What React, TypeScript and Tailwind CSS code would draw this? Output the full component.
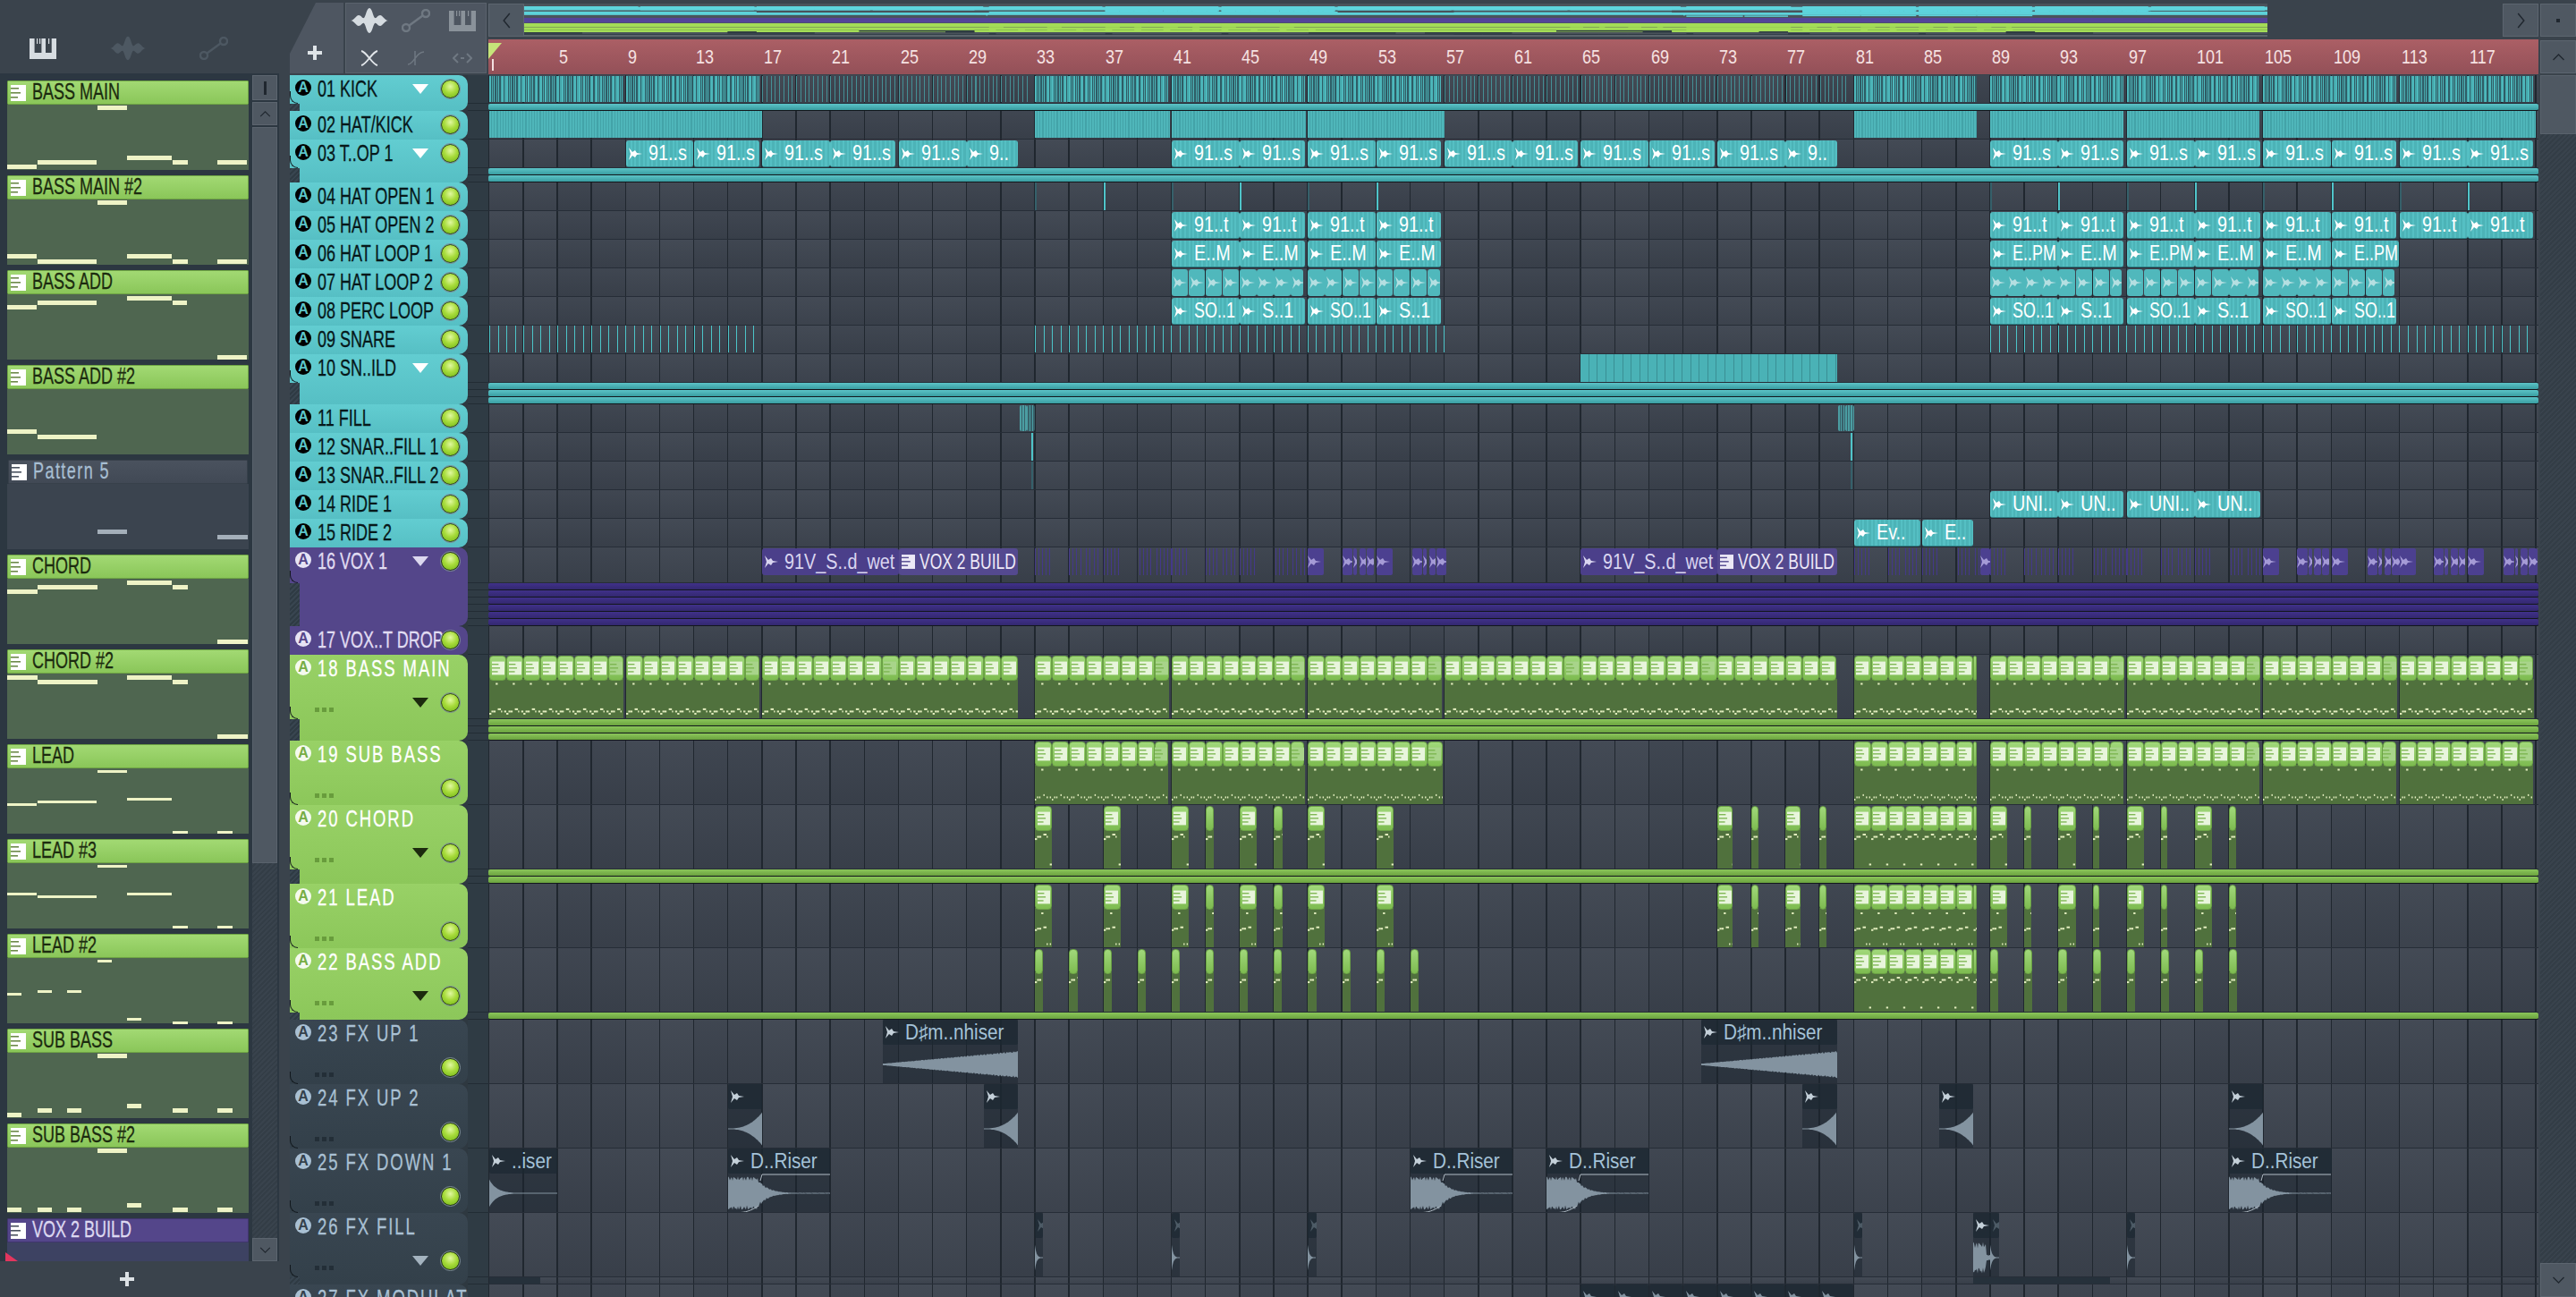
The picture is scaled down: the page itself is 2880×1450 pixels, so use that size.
import React from "react";

const BAR = 19.07;
const FONT = "[font-family:'Liberation_Sans',sans-serif]";

type Note = [number, number, number, number?];
type Pattern = { name: string; kind: "green" | "dim" | "purple"; notes: Note[] };

const BASS_MAIN: Note[] = [[0, 33, 67], [34, 33, 62], [67, 33, 62], [101, 33, 1], [134, 50, 57], [185, 17, 62], [235, 33, 62]];
const BASS_ADD: Note[] = [[0, 33, 12], [34, 33, 7], [67, 33, 7], [134, 50, 2], [185, 16, 7], [235, 33, 68]];
const CHORD: Note[] = [[0, 34, 12], [34, 34, 7], [67, 34, 7], [134, 50, 2], [185, 17, 7], [235, 34, 68]];
const SUB_BASS: Note[] = [[0, 16, 67], [34, 16, 62], [67, 16, 62], [101, 33, 1], [134, 16, 57], [185, 17, 62], [235, 17, 62]];
const LEAD: Note[] = [[0, 33, 39, 3], [34, 33, 36, 3], [67, 33, 36, 3], [101, 33, 2, 3], [134, 50, 33, 3], [185, 17, 70, 3], [235, 17, 70, 3]];

const patterns: Pattern[] = [
  { name: "BASS MAIN", kind: "green", notes: BASS_MAIN },
  { name: "BASS MAIN #2", kind: "green", notes: [[0, 33, 61], [34, 33, 67], [67, 33, 67], [101, 33, 1], [134, 50, 61], [185, 17, 67], [235, 33, 67]] },
  { name: "BASS ADD", kind: "green", notes: BASS_ADD },
  { name: "BASS ADD #2", kind: "green", notes: [[0, 33, 45], [34, 33, 51], [67, 33, 51]] },
  { name: "Pattern 5", kind: "dim", notes: [[101, 33, 51], [235, 34, 57]] },
  { name: "CHORD", kind: "green", notes: CHORD },
  { name: "CHORD #2", kind: "green", notes: [[0, 34, 2], [34, 34, 7], [67, 34, 7], [134, 50, 2], [185, 17, 7], [235, 34, 68]] },
  { name: "LEAD", kind: "green", notes: LEAD },
  { name: "LEAD #3", kind: "green", notes: [[0, 33, 33, 3], [34, 33, 36, 3], [67, 33, 36, 3], [101, 33, 2, 3], [134, 50, 33, 3], [185, 17, 70, 3], [235, 17, 70, 3]] },
  { name: "LEAD #2", kind: "green", notes: [[0, 16, 39, 3], [34, 16, 36, 3], [67, 16, 36, 3], [101, 16, 2, 3], [134, 16, 67, 3], [185, 17, 71, 3], [235, 17, 71, 3]] },
  { name: "SUB BASS", kind: "green", notes: SUB_BASS },
  { name: "SUB BASS #2", kind: "green", notes: [[0, 16, 67], [34, 16, 67], [67, 16, 67], [101, 33, 1], [134, 16, 62], [185, 17, 67], [235, 17, 67]] },
  { name: "VOX 2 BUILD", kind: "purple", notes: [] },
];

type ClipType = "audio" | "mini" | "kick" | "kickDim" | "solid" | "line" | "lineDim" | "snare" | "stripe" | "fill" | "fx" | "pat" | "sliver" | "sliverDim" | "patAudio" | "laneDark";
type WaveKind = "rise" | "up" | "fall" | "tail" | "blip" | "noise";
type Clip = { s: number; e: number; type: ClipType; label?: string; wave?: WaveKind; notes?: Note[] };
type Group = "teal" | "purple" | "green" | "dark";
type Track = { name: string; group: Group; main: number; lanes: number; laneClips?: Clip[]; clips: Clip[] };

const audio = (bars: number[], label: string): Clip[] =>
  bars.map((s) => ({ s, e: s + ((s - 1) % 8 === 4 && label !== "E..PM" ? 3.82 : 3.98), type: "audio", label }));

const seg = (pairs: number[][], type: ClipType, notes?: Note[]): Clip[] =>
  pairs.map(([s, e]) => ({ s, e, type, notes }));

const every = (from: number, to: number, step: number) => {
  const out: number[] = [];
  for (let b = from; b < to; b += step) out.push(b);
  return out;
};

const slivers = (start: number, type: ClipType): Clip[] =>
  [[0, 0.95], [2, 0.6], [2.65, 0.2], [3, 0.4], [3.45, 0.4], [4, 0.95], [6.1, 0.6], [6.75, 0.2], [7.1, 0.4], [7.55, 0.55]].map(([o, w]) => ({
    s: start + o,
    e: start + o + w,
    type,
  }));

const BLOCKS = [[1, 8.85], [9, 16.85], [33, 40.8], [41, 48.8], [49, 56.8], [81, 88.2], [89, 96.8], [97, 104.8], [105, 112.8], [113, 120.8]];
const LATE = [[33, 40.8], [41, 48.8], [49, 56.9], [81, 88.2], [89, 96.8], [97, 104.8], [105, 112.8], [113, 120.8]];
const chordShort = [[33, 34], [37, 38], [41, 42], [43, 43.5], [45, 46], [47, 47.5], [49, 50], [53, 54]];
const chordLate = [[73, 73.9], [75, 75.4], [77, 77.9], [79, 79.4], [81, 88.2], [89, 90], [91, 91.4], [93, 94], [95, 95.4], [97, 98], [99, 99.4], [101, 102], [103, 103.4]];

const tracks: Track[] = [
  { name: "01 KICK", group: "teal", main: 32, lanes: 1, clips: [...seg(BLOCKS, "kick"), ...seg([[17, 32.6], [57, 80.6]], "kickDim")] },
  { name: "02 HAT/KICK", group: "teal", main: 32, lanes: 0, clips: seg([[1, 9], [9, 17], [33, 40.9], [41, 48.9], [49, 57], [81, 88.2], [89, 96.8], [97, 104.8], [105, 121]], "solid") },
  {
    name: "03 T..OP 1",
    group: "teal",
    main: 32,
    lanes: 2,
    clips: [
      ...audio([9, 13, 17, 21, 25], "91..s"),
      { s: 29, e: 32, type: "audio", label: "9.." },
      ...audio([41, 45, 49, 53, 57, 61, 65, 69, 73], "91..s"),
      { s: 77, e: 80, type: "audio", label: "9.." },
      ...audio(every(89, 121, 4), "91..s"),
    ],
  },
  {
    name: "04 HAT OPEN 1",
    group: "teal",
    main: 32,
    lanes: 0,
    clips: [
      ...[37, 45, 53, 93, 101, 109, 117].map((s): Clip => ({ s, e: s + 0.1, type: "line" })),
      ...[33, 41, 49, 89, 97, 105, 113].map((s): Clip => ({ s, e: s + 0.1, type: "lineDim" })),
    ],
  },
  { name: "05 HAT OPEN 2", group: "teal", main: 32, lanes: 0, clips: audio([41, 45, 49, 53, ...every(89, 121, 4)], "91..t") },
  {
    name: "06 HAT LOOP 1",
    group: "teal",
    main: 32,
    lanes: 0,
    clips: [...audio([41, 45, 49, 53, 93, 101, 105], "E..M"), ...audio([89, 97, 109], "E..PM")],
  },
  {
    name: "07 HAT LOOP 2",
    group: "teal",
    main: 32,
    lanes: 0,
    clips: [...every(41, 57, 1), ...every(89, 113, 1)].map((s): Clip => ({ s, e: s + ((s - 1) % 8 === 7 ? 0.72 : 0.97), type: "mini" })),
  },
  {
    name: "08 PERC LOOP",
    group: "teal",
    main: 32,
    lanes: 0,
    clips: [...audio([41, 49, 89, 97, 105, 109], "SO..1"), ...audio([45, 53, 93, 101], "S..1")],
  },
  { name: "09 SNARE", group: "teal", main: 32, lanes: 0, clips: seg([[1, 17], [33, 57], [89, 121]], "snare") },
  { name: "10 SN..ILD", group: "teal", main: 32, lanes: 3, clips: seg([[65, 80]], "stripe") },
  { name: "11 FILL", group: "teal", main: 32, lanes: 0, clips: seg([[32.1, 32.5], [32.5, 33], [80.1, 80.5], [80.5, 81]], "fill") },
  { name: "12 SNAR..FILL 1", group: "teal", main: 32, lanes: 0, clips: seg([[32.8, 32.9], [80.8, 80.9]], "line") },
  { name: "13 SNAR..FILL 2", group: "teal", main: 32, lanes: 0, clips: seg([[32.8, 32.9], [80.8, 80.9]], "lineDim") },
  {
    name: "14 RIDE 1",
    group: "teal",
    main: 32,
    lanes: 0,
    clips: [...audio([89, 97], "UNI.."), ...audio([93, 101], "UN..")],
  },
  {
    name: "15 RIDE 2",
    group: "teal",
    main: 32,
    lanes: 0,
    clips: [
      { s: 81, e: 84.9, type: "audio", label: "Ev.." },
      { s: 85, e: 88, type: "audio", label: "E.." },
    ],
  },
  {
    name: "16 VOX 1",
    group: "purple",
    main: 40,
    lanes: 6,
    clips: [
      { s: 17, e: 25, type: "audio", label: "91V_S..d_wet" },
      { s: 25, e: 32, type: "patAudio", label: "VOX 2 BUILD" },
      { s: 65, e: 73, type: "audio", label: "91V_S..d_wet" },
      { s: 73, e: 80, type: "patAudio", label: "VOX 2 BUILD" },
      ...slivers(33, "sliverDim"),
      ...slivers(41, "sliverDim"),
      ...slivers(49, "sliver"),
      ...slivers(81, "sliverDim"),
      { s: 88.4, e: 89, type: "sliver" },
      ...slivers(89, "sliverDim"),
      ...slivers(97, "sliverDim"),
      ...slivers(105, "sliver"),
      ...slivers(113, "sliver"),
    ],
  },
  { name: "17 VOX..T DROP", group: "purple", main: 32, lanes: 0, clips: [] },
  {
    name: "18 BASS MAIN",
    group: "green",
    main: 72,
    lanes: 3,
    clips: seg([[1, 8.85], [9, 16.85], [17, 32], [33, 40.85], [41, 48.85], [49, 56.85], [57, 80], [81, 88.2], [89, 96.85], [97, 104.85], [105, 112.85], [113, 120.85]], "pat", BASS_MAIN),
  },
  { name: "19 SUB BASS", group: "green", main: 72, lanes: 0, clips: seg(LATE, "pat", SUB_BASS) },
  { name: "20 CHORD", group: "green", main: 72, lanes: 2, clips: seg([...chordShort, ...chordLate], "pat", CHORD) },
  { name: "21 LEAD", group: "green", main: 72, lanes: 0, clips: seg([...chordShort, ...chordLate], "pat", LEAD) },
  {
    name: "22 BASS ADD",
    group: "green",
    main: 72,
    lanes: 1,
    clips: seg(
      [...every(33, 57, 2).map((s) => [s, s + 0.48]), [81, 88.2], ...every(89, 105, 2).map((s) => [s, s + 0.48])],
      "pat",
      BASS_ADD
    ),
  },
  {
    name: "23 FX UP 1",
    group: "dark",
    main: 72,
    lanes: 0,
    clips: [
      { s: 24.05, e: 32, type: "fx", label: "D♯m..nhiser", wave: "rise" },
      { s: 72.05, e: 80, type: "fx", label: "D♯m..nhiser", wave: "rise" },
    ],
  },
  {
    name: "24 FX UP 2",
    group: "dark",
    main: 72,
    lanes: 0,
    clips: [15, 30, 78, 86, 103].map((s): Clip => ({ s, e: s + 2, type: "fx", wave: "up" })),
  },
  {
    name: "25 FX DOWN 1",
    group: "dark",
    main: 72,
    lanes: 0,
    clips: [
      { s: 1, e: 5, type: "fx", label: "..iser", wave: "tail" },
      ...[15, 55, 63, 103].map((s): Clip => ({ s, e: s + 6, type: "fx", label: "D..Riser", wave: "fall" })),
    ],
  },
  {
    name: "26 FX FILL",
    group: "dark",
    main: 72,
    lanes: 1,
    laneClips: seg([[1, 4], [88, 96]], "laneDark"),
    clips: [
      ...[33, 41, 49, 81, 97].map((s): Clip => ({ s, e: s + 0.48, type: "fx", wave: "blip" })),
      { s: 88, e: 89, type: "fx", wave: "noise" },
      { s: 89, e: 89.5, type: "fx", wave: "blip" },
    ],
  },
  {
    name: "27 FX MODULAT",
    group: "dark",
    main: 72,
    lanes: 0,
    clips: every(65, 81, 2).map((s): Clip => ({ s, e: s + 1.95, type: "fx" })),
  },
];

const HEADER: Record<Group, { bg: string; text: string; tri: string; badge: string; badgeText: string; dots: string }> = {
  teal: { bg: "bg-[linear-gradient(#62cdd1,#56bfc4)]", text: "text-[#07181a]", tri: "border-t-white", badge: "bg-black", badgeText: "text-[#5cc5c9]", dots: "bg-[#3a9094]" },
  purple: { bg: "bg-[#54468a]", text: "text-[#e0dcf2]", tri: "border-t-[#dcd8ef]", badge: "bg-[#e6e3f4]", badgeText: "text-[#54468a]", dots: "bg-[#3a2f66]" },
  green: { bg: "bg-[linear-gradient(#98d166,#8cc75a)]", text: "text-white", tri: "border-t-[#1c2a0e]", badge: "bg-[#f4faee]", badgeText: "text-[#76ad45]", dots: "bg-[#689c3c]" },
  dark: { bg: "bg-[linear-gradient(#394651,#33404a)]", text: "text-[#a9c0d3]", tri: "border-t-[#a4b3bf]", badge: "bg-[#a9c0d3]", badgeText: "text-[#34414c]", dots: "bg-[#232e37]" },
};

const LANE: Record<Group, string> = {
  teal: "bg-[linear-gradient(#5cc3c7,#399da1)]",
  purple: "bg-[linear-gradient(#40318a,#33286f)]",
  green: "bg-[linear-gradient(#8bc65a,#6ba33f)]",
  dark: "bg-[linear-gradient(#8bc65a,#6ba33f)]",
};

const GRID =
  "bg-[repeating-linear-gradient(90deg,#20272f_0,#20272f_1.5px,transparent_1.5px,transparent_38.14px),linear-gradient(rgba(255,255,255,0.025),rgba(0,0,0,0.05)),repeating-linear-gradient(90deg,#3f4651_0,#3f4651_76.28px,#3b424d_76.28px,#3b424d_152.56px)]";

const Arrow = ({ className = "text-white" }: { className?: string }) => (
  <svg viewBox="0 0 15 14" className={`w-[15px] h-[14px] shrink-0 ${className}`} fill="currentColor">
    <path d="M0 0 L4 5 L7 3 L9 6 L15 7 L9 8 L7 11 L4 9 L0 14 L2 7 Z" />
  </svg>
);

const PatIcon = ({ fg = "#fff", bg = "#4f6650", className = "w-[17px] h-[18px]" }: { fg?: string; bg?: string; className?: string }) => (
  <svg viewBox="0 0 17 18" className={`shrink-0 ${className}`}>
    <rect width="17" height="18" fill={fg} />
    <rect x="0" y="3" width="9" height="1.6" fill={bg} />
    <rect x="0" y="8" width="11" height="1.6" fill={bg} />
    <rect x="0" y="13" width="8" height="1.6" fill={bg} />
  </svg>
);

const PianoIcon = ({ color, bg, className }: { color: string; bg: string; className: string }) => (
  <svg viewBox="0 0 30 23" className={className}>
    <rect width="30" height="23" fill={color} />
    <rect x="5.6" y="0" width="7.8" height="16" fill={bg} />
    <rect x="18" y="0" width="6.7" height="16" fill={bg} />
    <rect x="8" y="0" width="1.2" height="6" fill={color} />
    <rect x="11" y="0" width="1.2" height="6" fill={color} />
    <rect x="21" y="0" width="1.2" height="6" fill={color} />
  </svg>
);

const WaveIcon = ({ color, className }: { color: string; className: string }) => (
  <svg viewBox="0 0 42 28" className={className} fill={color}>
    <path d="M0 14 C4 14 6 8 9 8 C12 8 13 12 15 11 C17 9 18 0 21 0 C24 0 25 9 27 11 C29 12 30 8 33 8 C36 8 38 14 42 14 C38 14 36 20 33 20 C30 20 29 16 27 17 C25 19 24 28 21 28 C18 28 17 19 15 17 C13 16 12 20 9 20 C6 20 4 14 0 14 Z" />
  </svg>
);

const CurveIcon = ({ color, className }: { color: string; className: string }) => (
  <svg viewBox="0 0 32 26" className={className} fill="none" stroke={color} strokeWidth="2.4">
    <circle cx="5" cy="21" r="4" />
    <circle cx="27" cy="5" r="4" />
    <line x1="8.5" y1="18.5" x2="23.5" y2="7.5" />
  </svg>
);

const PlusIcon = ({ className }: { className: string }) => (
  <svg viewBox="0 0 16 16" className={className} fill="currentColor">
    <rect x="6" y="0" width="4" height="16" />
    <rect x="0" y="6" width="16" height="4" />
  </svg>
);

const Chevron = ({ dir, className = "" }: { dir: "up" | "down" | "left" | "right"; className?: string }) => {
  const d = { up: "M2 12 L11 3 L20 12", down: "M2 3 L11 12 L20 3", left: "M12 2 L3 13 L12 24", right: "M3 2 L12 13 L3 24" }[dir];
  const box = dir === "up" || dir === "down" ? "0 0 22 15" : "0 0 15 26";
  return (
    <svg viewBox={box} className={className} fill="none" stroke="#20272f" strokeWidth="2">
      <path d={d} />
    </svg>
  );
};

const noise = (i: number) => Math.sin(i * 12.9898) * 0.5 + Math.sin(i * 4.1414) * 0.5;

const WAVES: Record<WaveKind, (t: number) => number> = {
  rise: (t) => 0.04 + 0.66 * t,
  up: (t) => 0.02 + 0.82 * Math.pow(t, 2.6),
  fall: (t) => (t < 0.28 ? 0.85 : Math.max(0.02, 0.85 * Math.exp(-(t - 0.28) * 10))),
  tail: (t) => Math.max(0.02, 0.7 * Math.exp(-t * 9)),
  blip: (t) => Math.max(0.02, 0.65 * Math.exp(-t * 5)),
  noise: (t) => (t < 0.75 ? 0.8 : 0.15),
};

const Wave = ({ kind, width }: { kind: WaveKind; width: number }) => {
  const h = 44;
  const env = WAVES[kind];
  const jitter = kind === "up" || kind === "tail" || kind === "blip" ? 0.03 : kind === "noise" ? 0.45 : kind === "fall" ? 0.28 : 0.16;
  const top: string[] = [];
  const bot: string[] = [];
  for (let x = 0; x <= width; x += 1) {
    const a = env(x / width);
    const u = a * (1 - jitter * Math.abs(noise(x))) * 22;
    const v = a * (1 - jitter * Math.abs(noise(x + 50))) * 22;
    top.push(`${x} ${(22 - u).toFixed(1)}`);
    bot.unshift(`${x} ${(22 + v).toFixed(1)}`);
  }
  return (
    <svg width={width} height={h} className="block">
      <path d={`M${top.join(" L")} L${bot.join(" L")} Z`} fill="#8393a0" />
      {kind === "fall" && (
        <g fill="none" stroke="#aeb9c2" strokeWidth="1">
          <path d={`M${width / 3 - 2} 8 L${width / 3} 1 L${width} 1`} />
          <path d="M0 43.5 L14 43.5 C22 43 28 40 34 36" />
        </g>
      )}
    </svg>
  );
};

const PatClip = ({ c, left, width, height }: { c: Clip; left: number; width: number; height: number }) => {
  const bars = Math.ceil(c.e - c.s - 0.01);
  const bodyH = height - 31;
  const notes = c.notes ?? [];
  return (
    <div className="absolute top-[1px] bottom-0 overflow-hidden" style={{ left, width }}>
      <div className="absolute left-0 right-0 top-[26px] bottom-0 bg-[#50713d]" />
      <div className="flex relative">
        {Array.from({ length: bars }, (_, i) => {
          const w = Math.min(1, c.e - c.s - i);
          const dim = i % 8 === 7 && w > 0.5;
          return (
            <div
              key={i}
              className="h-[28px] shrink-0 rounded-[4px] border border-[#6ba245] bg-[linear-gradient(#a1d87b,#7dbb50)] flex items-center justify-center"
              style={{ width: w * BAR }}
            >
              {w > 0.7 && <PatIcon fg={dim ? "#a8d48a" : "#e8f5dc"} bg="#7ab44e" className="w-[14px] h-[20px]" />}
            </div>
          );
        })}
      </div>
      <svg width={width} height={bodyH} className="absolute left-0 top-[29px]">
        {Array.from({ length: bars }, (_, i) =>
          notes.map((n, k) => (
            <rect
              key={`${i}-${k}`}
              x={(i + n[0] / 269) * BAR}
              y={1 + (n[2] / 73) * (bodyH - 4)}
              width={Math.max(1.4, (n[1] / 269) * BAR)}
              height="2"
              fill="#e3eebf"
            />
          ))
        )}
      </svg>
    </div>
  );
};

const ClipView = ({ c, group, height }: { c: Clip; group: Group; height: number }) => {
  const left = (c.s - 1) * BAR + 1;
  const width = (c.e - c.s) * BAR;
  const style = { left, width };
  const purple = group === "purple";
  const tight = c.label === "E..PM" || c.label === "SO..1";
  switch (c.type) {
    case "kick":
      return <div className="absolute top-[1px] bottom-[1px] bg-[repeating-linear-gradient(90deg,#4db8bc_0,#4db8bc_1.6px,#2e5c65_1.6px,#2e5c65_3.1px,#45a8ac_3.1px,#45a8ac_4.2px,#345a63_4.2px,#345a63_4.77px)]" style={style} />;
    case "kickDim":
      return <div className="absolute top-[1px] bottom-[1px] bg-[repeating-linear-gradient(90deg,#458f95_0,#458f95_1px,transparent_1px,transparent_4.77px)]" style={style} />;
    case "solid":
      return <div className="absolute top-0 bottom-[1px] bg-[repeating-linear-gradient(90deg,#4fb6ba_0,#4fb6ba_2px,#43a3a8_2px,#43a3a8_3.2px)]" style={style} />;
    case "line":
      return <div className="absolute top-0 bottom-0 w-[2px] bg-[#4fc4c9]" style={{ left }} />;
    case "lineDim":
      return <div className="absolute top-0 bottom-0 w-[2px] bg-[#35606a]" style={{ left }} />;
    case "snare":
      return <div className="absolute top-0 bottom-[1px] bg-[repeating-linear-gradient(90deg,#4cc4c8_0,#4cc4c8_1px,transparent_1px,transparent_9.53px)]" style={style} />;
    case "stripe":
      return <div className="absolute top-0 bottom-0 bg-[repeating-linear-gradient(90deg,#4ab2b6_0,#4ab2b6_8.5px,#3a8f94_8.5px,#3a8f94_9.53px)]" style={style} />;
    case "fill":
      return <div className="absolute top-[1px] bottom-[1px] rounded-[2px] bg-[repeating-linear-gradient(90deg,#4b9da2_0,#4b9da2_1.5px,#38616a_1.5px,#38616a_3px)]" style={style} />;
    case "sliver":
      return (
        <div className="absolute top-[1px] h-[30px] rounded-[2px] bg-[#4c4090] flex items-center overflow-hidden" style={style}>
          <Arrow className="text-[#a59bd6]" />
        </div>
      );
    case "sliverDim":
      return <div className="absolute top-[1px] h-[30px] bg-[repeating-linear-gradient(90deg,#44388a_0,#44388a_1px,transparent_1px,transparent_4px)]" style={style} />;
    case "mini":
      return (
        <div className="absolute top-[1px] h-[30px] rounded-[3px] bg-[#50b8bc] flex items-center overflow-hidden pl-[2px]" style={style}>
          <Arrow className="text-[#b4dfe1]" />
        </div>
      );
    case "audio":
      return (
        <div
          className={`absolute top-[1px] h-[30px] rounded-[3px] overflow-hidden flex items-center gap-[7px] pl-[3px] text-[23px] leading-none ${
            purple
              ? "bg-[#4b3f8a] text-[#d9d5f0]"
              : "text-white bg-[repeating-linear-gradient(90deg,#55bfc3_0,#55bfc3_2px,#4cb3b7_2px,#4cb3b7_4.7px)] border-b border-[#2d7f84]"
          }`}
          style={style}
        >
          <Arrow className={purple ? "text-[#d9d5f0]" : "text-white"} />
          <span className={`inline-block origin-left whitespace-nowrap ${tight ? "scale-x-[0.78]" : "scale-x-[0.86]"}`}>{c.label}</span>
        </div>
      );
    case "patAudio":
      return (
        <div className="absolute top-[1px] h-[30px] rounded-[3px] bg-[#54498f] text-[#eeeaf8] overflow-hidden flex items-center gap-[5px] pl-[3px] text-[23px] leading-none" style={style}>
          <PatIcon fg="#ece9f6" bg="#54498f" className="w-[15px] h-[18px]" />
          <span className="inline-block origin-left scale-x-[0.76] whitespace-nowrap">{c.label}</span>
        </div>
      );
    case "pat":
      return <PatClip c={c} left={left} width={width} height={height} />;
    case "fx":
      return (
        <div className="absolute top-0 h-[72px] bg-[rgba(26,36,45,0.5)] overflow-hidden" style={style}>
          <div className="h-[28px] bg-[rgba(28,40,50,0.7)] rounded-[2px] flex items-center gap-[7px] pl-[3px] text-[#a4c2d8] text-[23px] leading-none whitespace-nowrap">
            <Arrow className={c.wave === "blip" ? "text-[#4d5b66]" : c.wave ? "text-[#c4d0d9]" : "text-[#8393a0]"} />
            {c.label && <span className="inline-block origin-left scale-x-[0.9] whitespace-nowrap">{c.label}</span>}
          </div>
          {c.wave && <Wave kind={c.wave} width={Math.round(width)} />}
        </div>
      );
    case "laneDark":
      return <div className="absolute top-0 bottom-0 bg-[#26313b]" style={style} />;
    default:
      return null;
  }
};

const Led = ({ className }: { className: string }) => (
  <div className={`absolute z-10 w-[21px] h-[21px] rounded-full border border-[#24370f] outline outline-1 outline-[#7c8c94] bg-[radial-gradient(circle_at_50%_35%,#e0f7a0_0,#a8dc3c_45%,#6fb414_100%)] ${className}`} />
);

const TrackHeader = ({ t }: { t: Track }) => {
  const h = HEADER[t.group];
  const big = t.main >= 72;
  const laneH = t.lanes * 8;
  return (
    <div className={`relative w-[199px] shrink-0 rounded-r-[10px] ${h.bg}`}>
      <div className={`absolute left-[6px] top-[5px] w-[18px] h-[18px] rounded-full ${h.badge} ${h.badgeText} text-[16px] font-bold leading-[18px] text-center`}>A</div>
      <div
        className={`absolute left-[31px] top-0 h-[30px] leading-[30px] origin-left whitespace-nowrap text-[25px] [-webkit-text-stroke:0.3px] ${big ? "tracking-[2.6px] scale-x-[0.74]" : "scale-x-[0.72]"} ${h.text}`}
      >
        {t.name}
      </div>
      {t.lanes > 0 && (
        <div
          className={`absolute left-[137px] w-0 h-0 border-x-[9px] border-x-transparent border-t-[11px] ${h.tri} ${big ? "top-[48px]" : "top-[10px]"}`}
        />
      )}
      {(t.lanes > 0 || big || t.main === 40) && (
        <>
          <div className="absolute left-0 w-[9px] h-[14px] border-l border-b border-[#10161b] rounded-bl-[10px]" style={{ bottom: laneH }} />
          <div className="absolute left-0 bottom-0 w-[11px] bg-[repeating-linear-gradient(135deg,#2f3b44_0,#2f3b44_2px,#384550_2px,#384550_4px)]" style={{ height: laneH }} />
        </>
      )}
      {big && (
        <div className="absolute left-[28px] top-[59px] flex gap-[3px]">
          <span className={`w-[5px] h-[5px] ${h.dots}`} />
          <span className={`w-[5px] h-[5px] ${h.dots}`} />
          <span className={`w-[5px] h-[5px] ${h.dots}`} />
        </div>
      )}
      <Led className={`left-[169px] ${big ? "top-[43px]" : "top-[5px]"}`} />
    </div>
  );
};

const TrackRow = ({ t }: { t: Track }) => {
  const total = t.main + t.lanes * 8;
  return (
    <div className="flex shrink-0" style={{ height: total }}>
      <TrackHeader t={t} />
      <div className="w-[23px] shrink-0 flex flex-col bg-[#2f3b44]">
        <div className="border-b border-[#222c34]" style={{ height: t.main }} />
        {Array.from({ length: t.lanes }, (_, i) => (
          <div key={i} className="h-[8px] border-b border-[#222c34]" />
        ))}
      </div>
      <div className="flex-1 flex flex-col min-w-0">
        <div className={`relative overflow-hidden border-b border-[#262d37] ${GRID}`} style={{ height: t.main }}>
          {t.clips.map((c, i) => (
            <ClipView key={i} c={c} group={t.group} height={t.main} />
          ))}
        </div>
        {Array.from({ length: t.lanes }, (_, i) =>
          t.laneClips ? (
            <div key={i} className={`relative h-[8px] overflow-hidden border-b border-[#262d37] ${GRID}`}>
              {t.laneClips.map((c, k) => (
                <ClipView key={k} c={c} group={t.group} height={8} />
              ))}
            </div>
          ) : (
            <div key={i} className={`h-[8px] border-b border-[#12171c] rounded-[2px] ${LANE[t.group]}`} />
          )
        )}
      </div>
    </div>
  );
};

// the overview squeezes each colour group into its own band of the strip
const overviewY = (v: number) => {
  if (v < 612) return 3 + (v - 84) * 0.021;
  if (v < 732) return 16 + (v - 612) * 0.042;
  if (v < 1140) return 22 + (v - 732) * 0.02;
  return 30 + (v - 1140) * 0.015;
};

const Overview = () => {
  const k = 1949 / 120;
  const rows: React.ReactNode[] = [];
  let y = 84;
  tracks.forEach((t, i) => {
    const col = t.group === "teal" ? "#5ed4dc" : t.group === "purple" ? "#54459a" : t.group === "green" ? "#a4dd58" : "#2c3841";
    t.clips.forEach((c, j) => {
      rows.push(
        <rect
          key={`${i}-${j}`}
          x={(c.s - 1) * k}
          y={overviewY(y)}
          width={Math.max(1, (c.e - c.s) * k)}
          height={i < 3 ? 3 : 1.4}
          fill={col}
        />
      );
    });
    for (let l = 0; l < t.lanes; l++) {
      rows.push(<rect key={`${i}-l${l}`} x="0" y={overviewY(y + t.main + l * 8)} width="1949" height="2" fill={col} />);
    }
    y += t.main + t.lanes * 8;
  });
  return (
    <svg width="1949" height="37" className="block shrink-0 bg-[#4a535b] border-b-2 border-[#5c656c]">
      <rect x="0" y="16" width="1949" height="5" fill="#54459a" />
      <rect x="0" y="22" width="1949" height="3.5" fill="#a4dd58" />
      <rect x="0" y="26.5" width="1949" height="1.5" fill="#a4dd58" />
      <rect x="0" y="29" width="1949" height="1.5" fill="#8cc34f" />
      {rows}
    </svg>
  );
};

const PatternItem = ({ p }: { p: Pattern }) => {
  const head =
    p.kind === "green"
      ? "bg-[linear-gradient(#a2d973,#8ac659)] border-[#6fa544] text-[#1c2b0f]"
      : p.kind === "dim"
        ? "bg-[linear-gradient(#4a525e,#414955)] border-[#37404a] text-[#a7bed2] mx-[1px]"
        : "bg-[#54468a] border-[#41356f] text-[#dcd8f0]";
  const body = p.kind === "green" ? "bg-[#4f6650]" : p.kind === "dim" ? "bg-[#3b444f]" : "bg-[#3d4262]";
  const noteColor = p.kind === "green" ? "bg-[#eef3c6]" : "bg-[#a4afb9]";
  return (
    <div className="h-[106px] shrink-0">
      <div className={`h-[27px] border rounded-[1px] flex items-center pl-[3px] gap-[7px] text-[25px] leading-none ${head}`}>
        <PatIcon bg={p.kind === "green" ? "#6d8a4a" : "#4b5360"} />
        <span className={`inline-block origin-left whitespace-nowrap scale-x-[0.72] -translate-y-[1px] [-webkit-text-stroke:0.3px] ${p.kind === "dim" ? "tracking-[2px]" : ""}`}>{p.name}</span>
      </div>
      <div className={`relative h-[73px] ${body}`}>
        {p.notes.map((n, i) => (
          <div key={i} className={`absolute ${noteColor}`} style={{ left: n[0], width: n[1], top: n[2], height: n[3] ?? 5 }} />
        ))}
      </div>
    </div>
  );
};

const SideButton = ({ className, children }: { className: string; children?: React.ReactNode }) => (
  <div className={`shrink-0 bg-[#4f5862] border border-[#5c656f] flex items-center justify-center ${className}`}>{children}</div>
);

const PatternPanel = () => (
  <div className="w-[312px] shrink-0 flex flex-col">
    <div className="h-[82px] shrink-0 flex items-center pt-[26px] pl-[33px]">
      <PianoIcon color="#d6dce1" bg="#3a434c" className="w-[30px] h-[23px]" />
      <WaveIcon color="#4d5862" className="w-[40px] h-[28px] ml-[60px]" />
      <CurveIcon color="#4d5862" className="w-[32px] h-[26px] ml-[60px]" />
    </div>
    <div className="relative h-[1328px] shrink-0 bg-[#2c3741] flex overflow-hidden">
      <div className="w-[282px] shrink-0 pl-[8px] pr-[4px] pt-[8px] flex flex-col">
        {patterns.map((p) => (
          <PatternItem key={p.name} p={p} />
        ))}
      </div>
      <div className="w-[28px] shrink-0 flex flex-col pt-[2px]">
        <SideButton className="h-[28px]">
          <div className="w-[3px] h-[15px] bg-[#20272f]" />
        </SideButton>
        <SideButton className="h-[26px] mt-[2px]">
          <Chevron dir="up" className="w-[13px] h-[9px]" />
        </SideButton>
        <div className="h-[823px] mt-[2px] bg-[#4f5862] border border-[#59626c] shrink-0" />
        <div className="flex-1 bg-[repeating-linear-gradient(135deg,#39434d_0,#39434d_2px,#333d46_2px,#333d46_4px)]" />
        <SideButton className="h-[26px]">
          <Chevron dir="down" className="w-[13px] h-[9px]" />
        </SideButton>
      </div>
      <div className="absolute left-[6px] bottom-0 w-[14px] h-[10px] bg-[#e2365e] [clip-path:polygon(0_0,100%_100%,0_100%)]" />
    </div>
    <div className="flex-1 flex items-center justify-center pr-[28px] text-[#dce1e5]">
      <PlusIcon className="w-[16px] h-[16px]" />
    </div>
  </div>
);

const TopTools = () => (
  <div className="w-[222px] shrink-0 h-[84px] flex pt-[3px] pb-[2px]">
    <div className="w-[60px] h-[79px] bg-[#4e5661] [clip-path:polygon(29px_0,60px_0,60px_100%,0_100%,0_72%)] flex items-end justify-center pb-[15px] text-[#dfe4e8]">
      <PlusIcon className="w-[16px] h-[16px] ml-[-4px]" />
    </div>
    <div className="w-[158px] ml-[2px] bg-[#4e5661] border border-[#5a626c] grid grid-cols-3 grid-rows-2 items-center justify-items-center">
      <WaveIcon color="#d5dbe0" className="w-[42px] h-[28px]" />
      <CurveIcon color="#6f7882" className="w-[32px] h-[26px]" />
      <PianoIcon color="#8a929a" bg="#4e5661" className="w-[30px] h-[23px]" />
      <svg viewBox="0 0 20 18" className="w-[20px] h-[18px] mt-[6px]" fill="none" stroke="#e2e6ea" strokeWidth="2">
        <path d="M1 1 C7 2 13 16 19 17 M1 17 C7 16 13 2 19 1" />
      </svg>
      <svg viewBox="0 0 20 18" className="w-[20px] h-[18px] mt-[6px]" fill="none" stroke="#6f7882" strokeWidth="1.5">
        <path d="M1 16 C8 16 10 2 19 2 M9 1 L9 17" />
      </svg>
      <svg viewBox="0 0 22 14" className="w-[22px] h-[14px] mt-[6px]" fill="none" stroke="#6f7882" strokeWidth="2">
        <path d="M6 2 L1 7 L6 12 M16 2 L21 7 L16 12 M9 7 L13 7" />
      </svg>
    </div>
  </div>
);

const Ruler = () => (
  <div className="relative h-[39px] bg-[linear-gradient(#ab5f65,#935058)] overflow-hidden">
    <div className="absolute left-0 top-[4px] w-[15px] h-[18px] bg-[#c6e47a] [clip-path:polygon(0_0,100%_0,0_100%)]" />
    <div className="absolute left-[4px] top-[22px] w-[2px] h-[13px] bg-[#f3e0e0]" />
    {every(5, 121, 4).map((b) => (
      <span key={b} className="absolute top-[7px] origin-left scale-x-[0.82] text-[22px] leading-[26px] text-[#f6e2e2]" style={{ left: (b - 1) * BAR + 3 }}>
        {b}
      </span>
    ))}
  </div>
);

const MainScrollbar = () => (
  <div className="w-[40px] ml-[2px] shrink-0 flex flex-col pt-[4px]">
    <SideButton className="h-[37px]">
      <div className="w-[4px] h-[4px] bg-[#20272f]" />
    </SideButton>
    <SideButton className="h-[37px] mt-[4px]">
      <Chevron dir="up" className="w-[15px] h-[10px]" />
    </SideButton>
    <div className="h-[66px] mt-[2px] shrink-0 bg-[#4f5862] border border-[#59626c]" />
    <div className="flex-1 bg-[repeating-linear-gradient(135deg,#39434d_0,#39434d_2px,#333d46_2px,#333d46_4px)]" />
    <SideButton className="h-[38px]">
      <Chevron dir="down" className="w-[15px] h-[10px]" />
    </SideButton>
  </div>
);

export default function App() {
  return (
    <div className={`w-[2880px] h-[1450px] overflow-hidden flex bg-[#3a434c] ${FONT}`}>
      <PatternPanel />
      <div className="flex-1 flex flex-col ml-[12px] min-w-0 bg-[#2e3840]">
        <div className="flex h-[84px] shrink-0 bg-[#3a434c]">
          <TopTools />
          <div className="flex-1 flex flex-col min-w-0">
            <div className="h-[44px] flex pt-[4px] pb-[3px] shrink-0">
              <SideButton className="w-[40px] h-[37px]">
                <Chevron dir="left" className="w-[11px] h-[20px]" />
              </SideButton>
              <Overview />
              <div className="flex-1" />
              <SideButton className="w-[40px] h-[37px]">
                <Chevron dir="right" className="w-[11px] h-[20px]" />
              </SideButton>
            </div>
            <Ruler />
          </div>
        </div>
        <div className="flex-1 flex flex-col min-h-0 overflow-hidden">
          {tracks.map((t) => (
            <TrackRow key={t.name} t={t} />
          ))}
        </div>
      </div>
      <MainScrollbar />
    </div>
  );
}
